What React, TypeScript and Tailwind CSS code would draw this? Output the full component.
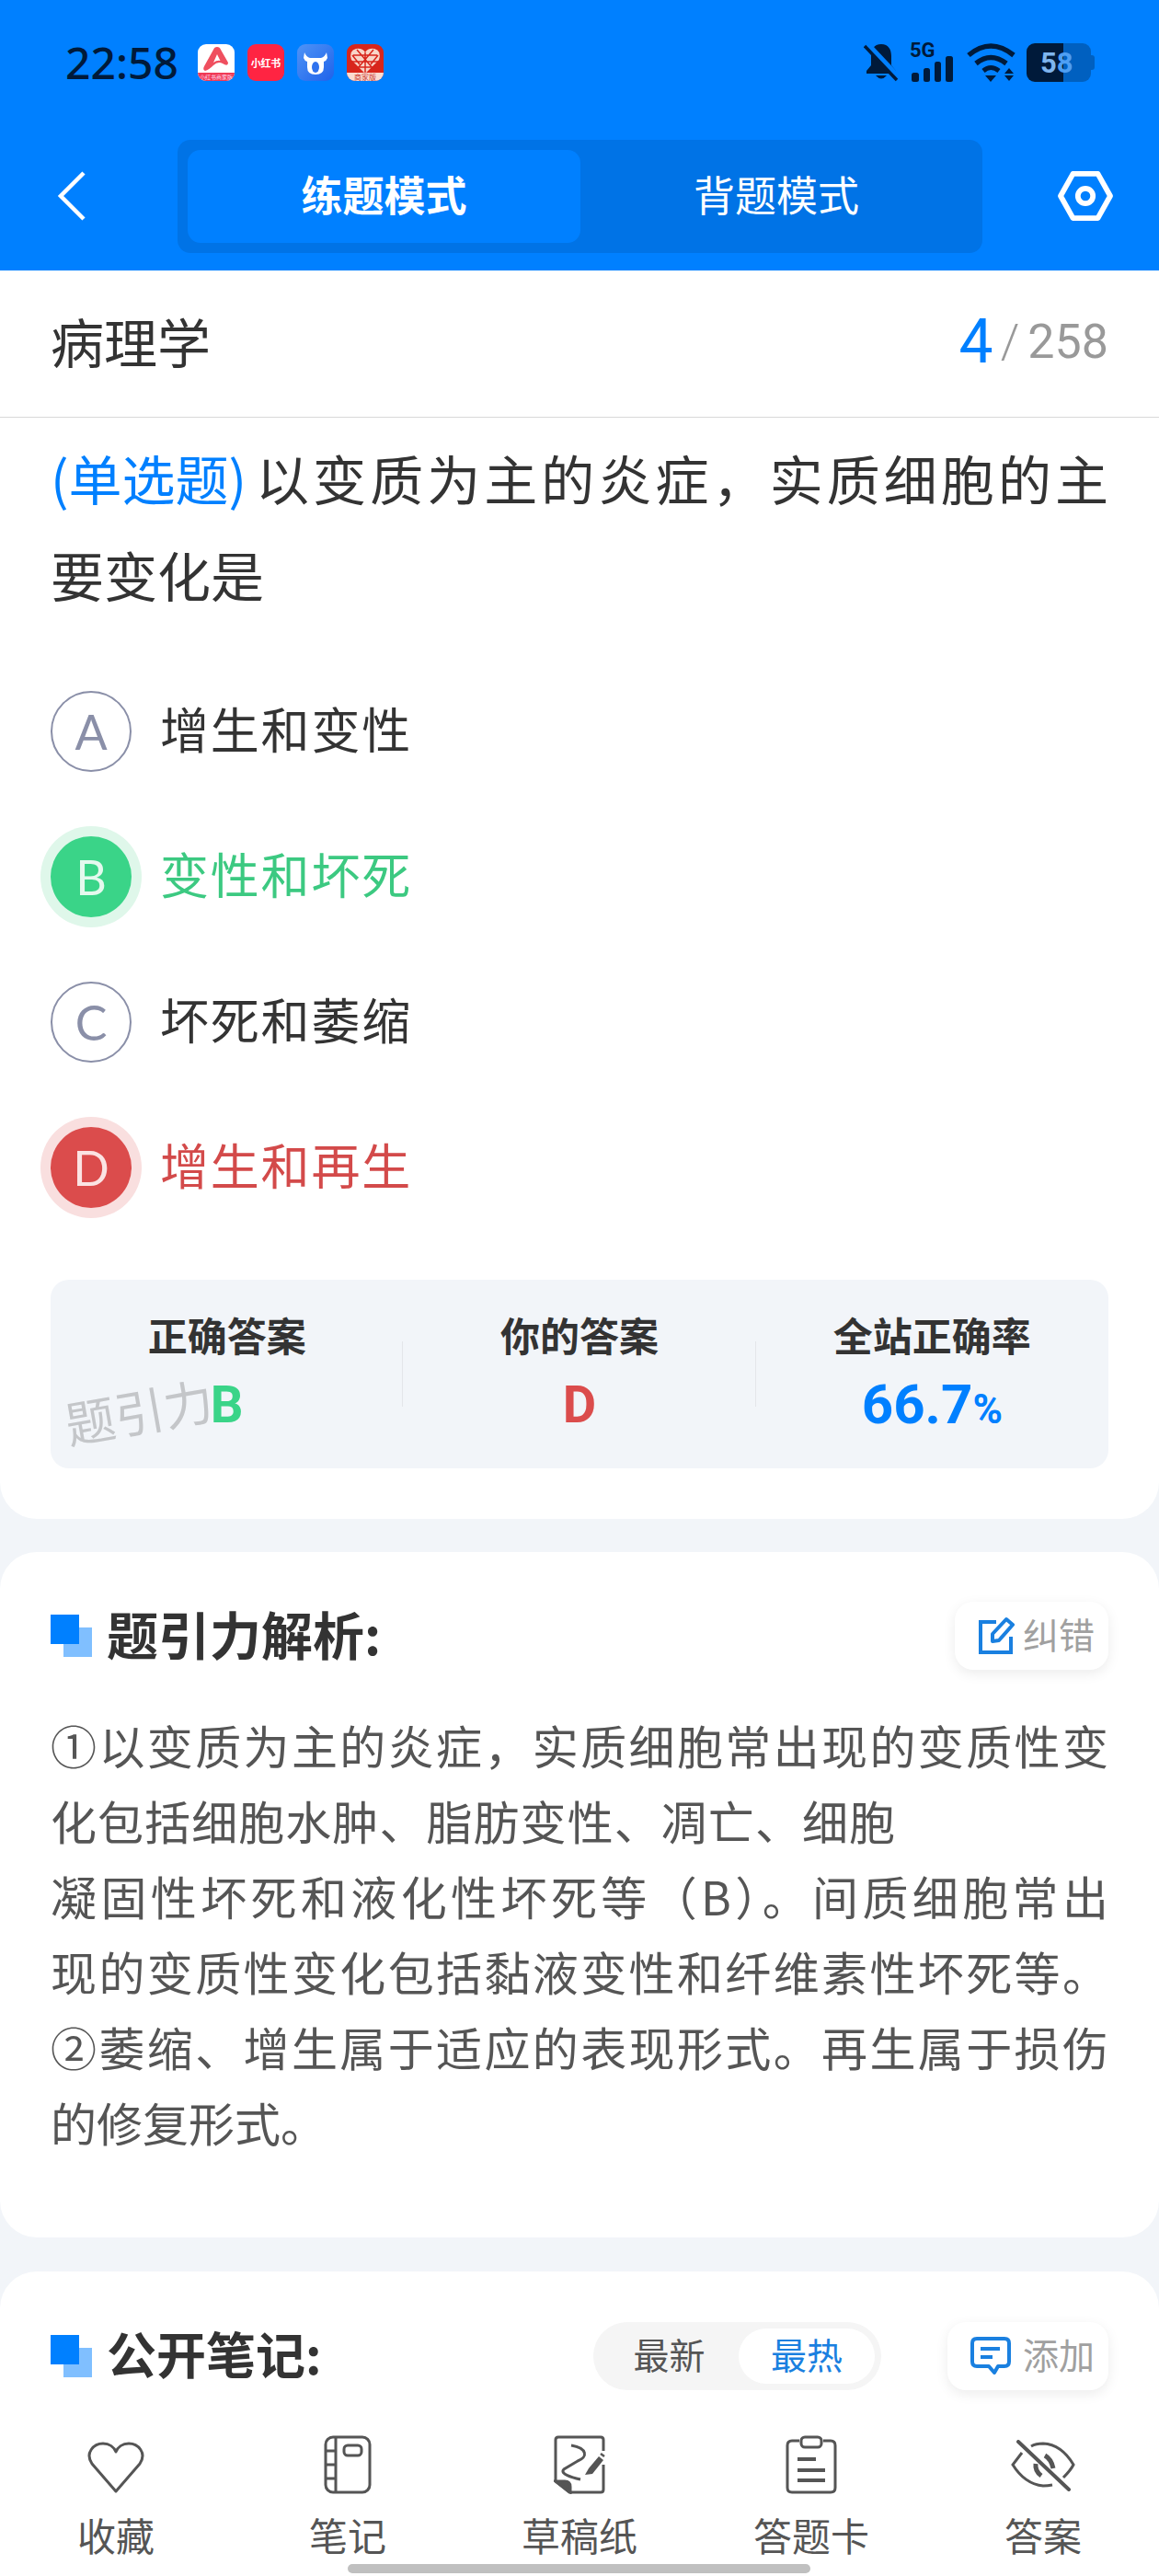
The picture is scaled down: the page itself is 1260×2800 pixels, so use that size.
import React from "react";

const cjk = "font-['Noto_Sans_CJK_SC','Noto_Sans',sans-serif]";

function Squares() {
  return (
    <div className="relative w-[45px] h-[46px] shrink-0">
      <div className="absolute right-0 bottom-0 w-[31px] h-[32px] bg-[#80bfff]" />
      <div className="absolute left-0 top-0 w-[31px] h-[32px] bg-[#0080ff]" />
    </div>
  );
}

function AppIcons() {
  return (
    <div className="flex items-center gap-[14px] ml-[21px]">
      <div className="relative w-[40px] h-[40px] rounded-[9px] bg-white overflow-hidden">
        <svg viewBox="0 0 40 40" className="w-full h-full">
          <path d="M21 3 Q24 3 25 6 L33 20 Q33 25 27 21 Q22 18 17 23 Q12 28 8 29 Q5 28 7 24 L17 6 Q18 3 21 3 Z" fill="#ef4f5f" />
          <path d="M21 11 L24.500 18 Q21 17 17 20 Z" fill="#fff" />
          <rect x="0" y="31" width="40" height="9" fill="#f03a55" />
        </svg>
        <span className={`absolute left-0 right-0 bottom-[0px] text-center text-[6px] leading-[9px] whitespace-nowrap text-[#fde] ${cjk}`}>小红书商家版</span>
      </div>
      <div className={`w-[40px] h-[40px] rounded-[9px] bg-[#ff2442] flex items-center justify-center text-white text-[11px] tracking-[-0.3px] font-bold ${cjk}`}>小红书</div>
      <div className="w-[40px] h-[40px] rounded-[9px] bg-gradient-to-br from-[#4f93f6] to-[#1f62ea]">
        <svg viewBox="0 0 40 40" className="w-full h-full">
          <path d="M8 9 Q10 14 14 15 H26 Q30 14 32 9 L33 15 Q32 18 29 19 V25 Q29 33 20 33 Q11 33 11 25 V19 Q8 18 7 15 Z" fill="#fff" />
          <ellipse cx="20" cy="25" rx="4" ry="6" fill="#2f72ee" />
        </svg>
      </div>
      <div className="relative w-[40px] h-[40px] rounded-[9px] bg-[#d8261c] overflow-hidden">
        <svg viewBox="0 0 40 40" className="w-full h-full" fill="none">
          <path d="M20 32 L5 17 Q2 7 10 5 Q17 4 20 9 Q23 4 30 5 Q38 7 35 17 Z" fill="#f8d5c8" />
          <path d="M20 9 V32 M7 12 H33 M6 19 H34 M11 25 H29 M11 6 L28 26 M29 6 L12 26 M6 12 L14 22 M34 12 L26 22" stroke="#d8261c" strokeWidth="1.500" />
          <rect x="0" y="31" width="40" height="9" fill="#fbdcd2" />
        </svg>
        <span className={`absolute left-0 right-0 bottom-0 text-center text-[8px] leading-[9px] whitespace-nowrap text-[#c9362c] ${cjk}`}>商家版</span>
      </div>
    </div>
  );
}

function StatusRight() {
  return (
    <div className="flex items-center text-[#001a3a]">
      <svg viewBox="0 0 38 42" className="w-[38px] h-[42px]">
        <path d="M19 1 C11 1 8 7 8 14 V24 L3 30 V33 H35 V30 L30 24 V14 C30 7 27 1 19 1 Z" fill="#001a3a" />
        <path d="M13 35 Q19 42 25 35 Z" fill="#001a3a" />
        <path d="M4 1 L38 37" stroke="#0080ff" strokeWidth="6" />
        <path d="M1 3 L36 40" stroke="#001a3a" strokeWidth="3.500" />
      </svg>
      <div className="relative w-[50px] h-[42px] ml-[12px]">
        <span className="absolute left-0 top-[-3px] text-[22px] leading-[22px] font-bold font-['Roboto',sans-serif] tracking-[0px]">5G</span>
        <div className="absolute bottom-0 left-[2px] flex items-end gap-[5px]">
          <div className="w-[8px] h-[10px] rounded-[2.5px] bg-[#001a3a]" />
          <div className="w-[7px] h-[15px] rounded-[2.5px] bg-[#001a3a]" />
          <div className="w-[7px] h-[22px] rounded-[2.5px] bg-[#001a3a]" />
          <div className="w-[8px] h-[28px] rounded-[2.5px] bg-[#001a3a]" />
        </div>
      </div>
      <svg viewBox="0 0 54 42" className="w-[54px] h-[42px] ml-[12px]" fill="none" stroke="#001a3a" strokeWidth="5.500">
        <path d="M2 13 Q26 -7 51 13" />
        <path d="M10 22 Q26 9 43 22" />
        <path d="M18 30 Q26 23 35 30" strokeWidth="5" />
        <path d="M20 35 H32 L26 42 Z" fill="#001a3a" stroke="none" />
        <path d="M46 27 L51 33 H41 Z M41 35 H51 L46 41 Z" fill="#001a3a" stroke="none" />
      </svg>
      <div className="relative w-[74px] h-[42px] ml-[11px] flex">
        <div className="w-[40px] h-full bg-[#001a3a] rounded-l-[9px]" />
        <div className="w-[30px] h-full bg-[#0060c0] rounded-r-[9px]" />
        <div className="w-[4px] h-[16px] self-center bg-[#0060c0] rounded-r-[3px]" />
        <div className="absolute inset-y-0 left-[15px] flex items-center text-[31px] leading-none font-bold font-['Roboto',sans-serif]">
          <span className="text-[#7fb5ee]">5</span>
          <span className="text-[#4f9ff2]">8</span>
        </div>
      </div>
    </div>
  );
}

function Header() {
  return (
    <div className="h-[294px] bg-[#0080ff] shrink-0">
      <div className="h-[152px] pl-[71px] pr-[70px] pt-[47px] flex items-start justify-between">
        <div className="flex items-center h-[42px]">
          <span className="text-[#001a3a] text-[48px] leading-none font-medium font-['Noto_Sans',sans-serif]">22:58</span>
          <AppIcons />
        </div>
        <StatusRight />
      </div>
      <div className="flex items-start pl-[62px] pr-[50px]">
        <svg viewBox="0 0 32 54" className="w-[32px] h-[54px] mt-[34px] shrink-0" fill="none" stroke="#fff" strokeWidth="4.500">
          <path d="M29 2 L4 27 L29 52" />
        </svg>
        <div className="ml-[99px] w-[875px] h-[123px] rounded-[14px] bg-[#0073e6] p-[11px] flex">
          <div className={`w-[427px] h-[101px] pb-[6px] rounded-[14px] bg-[#0080ff] flex items-center justify-center text-white text-[45px] font-bold ${cjk}`}>练题模式</div>
          <div className={`flex-1 h-[101px] pb-[6px] flex items-center justify-center text-white text-[45px] ${cjk}`}>背题模式</div>
        </div>
        <svg viewBox="0 0 62 56" className="w-[60px] h-[54px] ml-[82px] mt-[34px] shrink-0" fill="none" stroke="#fff" strokeWidth="6">
          <path d="M17 3 H45 L59 28 L45 53 H17 L3 28 Z" strokeLinejoin="round" />
          <circle cx="31" cy="28" r="8.500" />
        </svg>
      </div>
    </div>
  );
}

function Option({ letter, text, state }: { letter: string; text: string; state?: "right" | "wrong" }) {
  const circle =
    state === "right"
      ? "bg-[#3ad488] text-[#e4f9ee] shadow-[0_0_0_11px_#dff7ea]"
      : state === "wrong"
      ? "bg-[#db4c4c] text-[#fbe3e3] shadow-[0_0_0_11px_#f9dfdf]"
      : "border-[2.5px] border-[#8a8fa8] text-[#8a8fa8]";
  const tc = state === "right" ? "text-[#3cc981]" : state === "wrong" ? "text-[#d34a4a]" : "text-[#333333]";
  return (
    <div className="h-[158px] flex items-center">
      <div className={`w-[88px] h-[88px] rounded-full flex items-center justify-center text-[52px] font-normal font-['Lato',sans-serif] shrink-0 ${circle}`}>{letter}</div>
      <div className={`ml-[31px] pb-[6px] text-[53px] tracking-[1.800px] ${cjk} ${tc}`}>{text}</div>
    </div>
  );
}

function Stat({ label, children, divider }: { label: string; children: React.ReactNode; divider?: boolean }) {
  return (
    <div className="relative flex-1 flex flex-col items-center pt-[33px]">
      <div className={`text-[43px] leading-[52px] font-bold text-[#333333] ${cjk}`}>{label}</div>
      <div className="mt-[18px] text-[56px] leading-[66px] font-bold font-['Roboto',sans-serif]">{children}</div>
      {divider && <div className="absolute right-0 top-[67px] h-[71px] w-[1px] bg-[#e4e6ea]" />}
    </div>
  );
}

function Question() {
  return (
    <div className="bg-white rounded-b-[40px] px-[55px] pt-[13px] pb-[55px]">
      <div className={`text-[58px] leading-[105px] text-[#333333] ${cjk}`}>
        <div className="flex justify-between whitespace-nowrap">
          <span className="text-[#0080ff]">(单选题)</span>
          <span className="w-[927px] [text-align:justify] [text-align-last:justify]">以变质为主的炎症，实质细胞的主</span>
        </div>
        <div>要变化是</div>
      </div>
      <div className="mt-[39px]">
        <Option letter="A" text="增生和变性" />
        <Option letter="B" text="变性和坏死" state="right" />
        <Option letter="C" text="坏死和萎缩" />
        <Option letter="D" text="增生和再生" state="wrong" />
      </div>
      <div className="relative mt-[43px] h-[205px] rounded-[20px] bg-[#f2f5f9] flex">
        <Stat label="正确答案" divider><span className="text-[#3ad488]">B</span></Stat>
        <Stat label="你的答案" divider><span className="text-[#db4c4c]">D</span></Stat>
        <Stat label="全站正确率">
          <span className="text-[#0080ff] text-[60px]">66.7<span className="text-[44px]">%</span></span>
        </Stat>
        <div className={`absolute left-[15px] top-[112px] -rotate-[10deg] text-[54px] leading-[60px] text-[#c4c6c9] ${cjk}`}>题引力</div>
      </div>
    </div>
  );
}

function Analysis() {
  const lines = [
    { t: "①以变质为主的炎症，实质细胞常出现的变质性变", j: true },
    { t: "化包括细胞水肿、脂肪变性、凋亡、细胞", j: true, w: "w-[918px]" },
    { t: "凝固性坏死和液化性坏死等（B）。间质细胞常出", j: true },
    { t: "现的变质性变化包括黏液变性和纤维素性坏死等。", j: true },
    { t: "②萎缩、增生属于适应的表现形式。再生属于损伤", j: true },
    { t: "的修复形式。", j: false },
  ];
  return (
    <div className="mt-[36px] bg-white rounded-[40px] px-[55px] pt-[54px] pb-[85px]">
      <div className="flex items-center justify-between h-[74px]">
        <div className="flex items-center gap-[16px]">
          <Squares />
          <div className={`pb-[6px] text-[56px] leading-none font-bold text-[#333333] ${cjk}`}>题引力解析:</div>
        </div>
        <div className="w-[167px] h-[74px] rounded-[20px] bg-white shadow-[0_4px_14px_rgba(0,0,0,0.08)] flex items-center pl-[25px]">
          <svg viewBox="0 0 40 42" className="w-[40px] h-[42px]" fill="none" stroke="#1a80e0" strokeWidth="4">
            <path d="M20 6 H3 V39 H36 V22" />
            <path d="M16 27 L16 19 L31 3 L38 9 L23 26 Z" strokeLinejoin="round" />
          </svg>
          <span className={`ml-[9px] pb-[5px] text-[39px] text-[#a0a0a0] whitespace-nowrap ${cjk}`}>纠错</span>
        </div>
      </div>
      <div className={`mt-[40px] text-[50px] leading-[82px] text-[#555555] ${cjk}`}>
        {lines.map((l) => (
          <div key={l.t} className={`whitespace-nowrap ${l.w ?? ""} ${l.j ? "[text-align:justify] [text-align-last:justify]" : ""}`}>{l.t}</div>
        ))}
      </div>
    </div>
  );
}

function Notes() {
  return (
    <div className="mt-[37px] bg-white rounded-[40px] px-[55px] pt-[55px] pb-[120px]">
      <div className="flex items-center h-[74px]">
        <Squares />
        <div className={`ml-[16px] pb-[6px] text-[54px] leading-none font-bold text-[#333333] ${cjk}`}>公开笔记:</div>
        <div className="ml-auto w-[313px] h-[74px] rounded-full bg-[#f5f5f5] p-[7px] flex items-center">
          <div className={`w-[151px] pb-[5px] text-center text-[39px] text-[#555555] ${cjk}`}>最新</div>
          <div className={`w-[148px] h-[60px] pb-[5px] rounded-full bg-white flex items-center justify-center text-[39px] text-[#1a80e0] ${cjk}`}>最热</div>
        </div>
        <div className="ml-[72px] w-[175px] h-[74px] rounded-[20px] bg-white shadow-[0_4px_14px_rgba(0,0,0,0.08)] flex items-center pl-[25px] shrink-0">
          <svg viewBox="0 0 44 42" className="w-[44px] h-[42px]" fill="none" stroke="#1a80e0" strokeWidth="4">
            <path d="M7 2 H37 Q42 2 42 7 V27 Q42 32 37 32 H30 L26 39 L20 32 H7 Q2 32 2 27 V7 Q2 2 7 2 Z" strokeLinejoin="round" />
            <path d="M11 13 H32 M11 22 H24" />
          </svg>
          <span className={`ml-[13px] pb-[5px] text-[39px] text-[#a0a0a0] whitespace-nowrap ${cjk}`}>添加</span>
        </div>
      </div>
    </div>
  );
}

const stroke = { fill: "none", stroke: "#555555", strokeWidth: 3 };

const navItems: { label: string; icon: React.ReactNode }[] = [
  {
    label: "收藏",
    icon: (
      <svg viewBox="0 0 64 56" className="w-[64px] h-[56px] mt-[7px]" {...stroke}>
        <path d="M32 54 L6 24 C-2 12 8 2 18 2 C25 2 30 6 32 11 C34 6 39 2 46 2 C56 2 66 12 58 24 Z" strokeLinejoin="round" />
      </svg>
    ),
  },
  {
    label: "笔记",
    icon: (
      <svg viewBox="0 0 52 64" className="w-[52px] h-[64px]" {...stroke}>
        <rect x="2" y="2" width="48" height="60" rx="8" />
        <path d="M13 2 V62 M2 17 H13 M2 32 H13 M2 47 H13" />
        <rect x="22" y="11" width="19" height="11" rx="4" />
      </svg>
    ),
  },
  {
    label: "草稿纸",
    icon: (
      <svg viewBox="0 0 56 64" className="w-[56px] h-[64px]" {...stroke}>
        <path d="M54 17 V5 Q54 2 51 2 H5 Q2 2 2 5 V50 L17 62 H51 Q54 62 54 59 V32" strokeLinejoin="round" />
        <path d="M2 50 H12 Q18 50 18 56 V62 Z" fill="#555555" />
        <path d="M19 11 C37 14 37 24 26 28 L11 37 C6 42 20 46 29 48" />
        <path d="M34 43 L38 36 L49 23 L54 27 L42 42 Z" fill="#555555" stroke="none" />
        <path d="M51 20 L55 23" strokeWidth="2.500" />
      </svg>
    ),
  },
  {
    label: "答题卡",
    icon: (
      <svg viewBox="0 0 56 64" className="w-[56px] h-[64px]" {...stroke}>
        <path d="M15 6 H7 Q2 6 2 11 V57 Q2 62 7 62 H49 Q54 62 54 57 V11 Q54 6 49 6 H41" />
        <rect x="17" y="2" width="22" height="11" rx="4" />
        <path d="M13 26 H33 M13 38 H43 M13 49 H43" strokeWidth="4" />
      </svg>
    ),
  },
  {
    label: "答案",
    icon: (
      <svg viewBox="0 0 70 56" className="w-[70px] h-[56px] mt-[5px]" {...stroke}>
        <path d="M22 7 Q27 4 35 4 Q55 5 68 27 Q65 33 57 41 M12 14 L2 27 Q15 48 35 50 Q40 50 45 49" />
        <path d="M27 26 Q26 34 33 39 M37 17 Q44 21 46 31" strokeWidth="5" />
        <path d="M8 2 L63 54" strokeWidth="4" strokeLinecap="round" />
      </svg>
    ),
  },
];

function BottomBar() {
  return (
    <div className="h-[180px] bg-white shrink-0 flex pt-[27px]">
      {navItems.map((n) => (
        <div key={n.label} className="flex-1 flex flex-col items-center">
          <div className="h-[64px] flex items-start justify-center">{n.icon}</div>
          <div className={`mt-[19px] text-[42px] leading-[50px] text-[#555555] ${cjk}`}>{n.label}</div>
        </div>
      ))}
    </div>
  );
}

export default function App() {
  return (
    <div className="relative w-[1260px] h-[2800px] overflow-hidden bg-[#f2f5f9] flex flex-col">
      <Header />
      <div className="flex-1 min-h-0 overflow-hidden">
        <div className="h-[160px] bg-white border-b border-[#d8d8d8] px-[55px] flex items-center justify-between">
          <div className={`pb-[6px] text-[58px] text-[#333333] ${cjk}`}>病理学</div>
          <div className="flex items-center font-['Roboto',sans-serif] pb-[4px]">
            <span className="text-[66px] text-[#0080ff] ml-[2px]">4</span>
            <span className="text-[52px] text-[#999999] ml-[8px] font-light">/</span>
            <span className="text-[52px] text-[#999999] ml-[9px]">258</span>
          </div>
        </div>
        <Question />
        <Analysis />
        <Notes />
      </div>
      <BottomBar />
      <div className="absolute left-[378px] bottom-[3px] w-[503px] h-[10px] rounded-full bg-[#c0c0c0]" />
    </div>
  );
}
